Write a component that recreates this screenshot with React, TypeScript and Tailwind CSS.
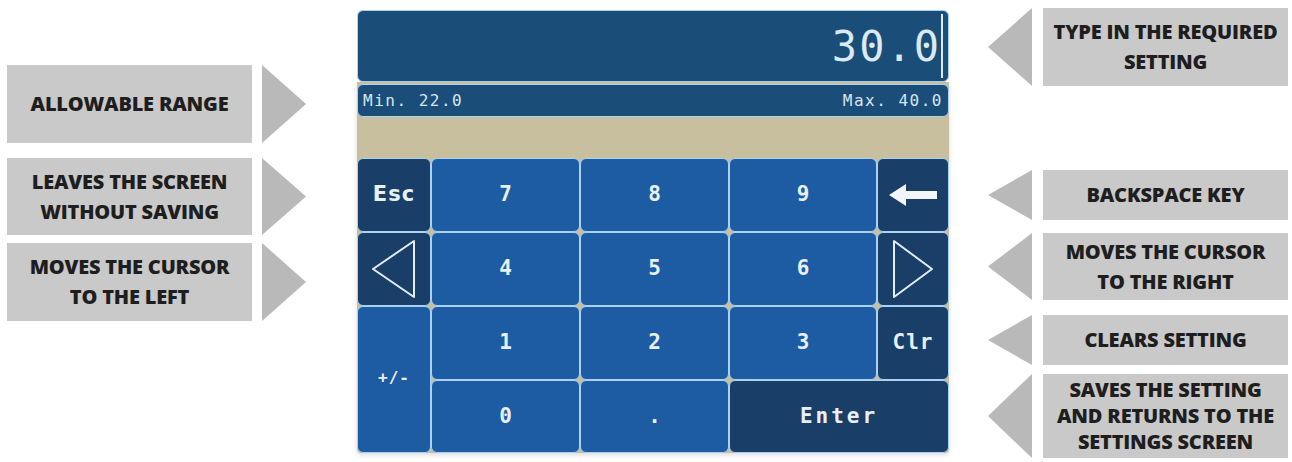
import React from 'react'

const labelFont = { fontFamily: '"Open Sans", "Liberation Sans", sans-serif' }

function LeftLabel({ lines, className }: { lines: string[]; className: string }) {
  return (
    <div className={`flex ${className}`}>
      <div className="w-[245px] bg-[#c9c9c9] flex flex-col items-center justify-center text-[20px] leading-[30px] font-extrabold text-[#1e1e1e] tracking-[-0.2px]">
        {lines.map((l) => (
          <span key={l}>{l}</span>
        ))}
      </div>
      <div className="ml-[10px] w-[44px] bg-[#b9b9b9] [clip-path:polygon(0_0,100%_50%,0_100%)]"></div>
    </div>
  )
}

function RightLabel({
  lines,
  className,
  lead = 'leading-[30px]',
}: {
  lines: string[]
  className: string
  lead?: string
}) {
  return (
    <div className={`flex ${className}`}>
      <div className="w-[44px] bg-[#b9b9b9] [clip-path:polygon(0_50%,100%_0,100%_100%)]"></div>
      <div
        className={`ml-[11px] w-[245px] bg-[#c9c9c9] flex flex-col items-center justify-center text-[20px] ${lead} font-extrabold text-[#1e1e1e] tracking-[-0.2px]`}
      >
        {lines.map((l) => (
          <span key={l}>{l}</span>
        ))}
      </div>
    </div>
  )
}

function Key({
  children,
  dark,
  className = '',
}: {
  children: React.ReactNode
  dark?: boolean
  className?: string
}) {
  return (
    <div
      className={`flex items-center justify-center rounded-[6px] border-[1.5px] border-[#a9d2f3] text-[#e8f0f6] font-bold ${
        dark ? 'bg-[#193f69]' : 'bg-[#1d5ca2]'
      } ${className}`}
    >
      {children}
    </div>
  )
}

export default function App() {
  const mono = { fontFamily: '"DejaVu Sans Mono", "Liberation Mono", monospace' }
  const digit = 'text-[21px]'

  return (
    <div className="w-[1292px] h-[462px] bg-white flex relative overflow-hidden" style={labelFont}>
      {/* left hints */}
      <div className="ml-[7px] flex flex-col">
        <LeftLabel lines={['ALLOWABLE RANGE']} className="mt-[65px] h-[78px]" />
        <LeftLabel lines={['LEAVES THE SCREEN', 'WITHOUT SAVING']} className="mt-[15px] h-[77px]" />
        <LeftLabel lines={['MOVES THE CURSOR', 'TO THE LEFT']} className="mt-[8px] h-[78px]" />
      </div>

      {/* keypad screen */}
      <div className="ml-[51px] mt-[10px] w-[592px] flex flex-col" style={mono}>
        <div className="h-[72px] rounded-[6px] border-[1.5px] border-[#a9d2f3] bg-[#1b4d79] flex items-center justify-end pr-[5px]">
          <span className="text-[42px] text-[#dbe9f3] tracking-[2px] font-light">30.0</span>
          <span className="w-[2px] h-[64px] bg-[#dbe9f3]"></span>
        </div>
        <div className="bg-[#c8bf9e] rounded-b-[4px] shadow-[0_2px_5px_rgba(0,0,0,0.15)]">
          <div className="mt-[2px] h-[33px] rounded-[6px] border-[1.5px] border-[#a9d2f3] bg-[#1b4d79] flex items-center justify-between px-[5px] text-[16px] text-[#d6e6f1] tracking-[1.5px]">
            <span>Min. 22.0</span>
            <span>Max. 40.0</span>
          </div>
          <div className="h-[41px]"></div>
          <div className="grid grid-cols-[74px_149px_149px_148px_72px] grid-rows-[74px_74px_74px_73px]">
            <Key dark className="text-[21px] tracking-[1px]">
              <span style={{ fontFamily: '"DejaVu Sans", sans-serif' }}>Esc</span>
            </Key>
            <Key className={digit}>7</Key>
            <Key className={digit}>8</Key>
            <Key className={digit}>9</Key>
            <Key dark>
              <svg width="52" height="26" viewBox="0 0 52 26">
                <path d="M2 13 L19 2 L19 9 L50 9 L50 17 L19 17 L19 24 Z" fill="#f2f6fa" />
              </svg>
            </Key>

            <Key dark>
              <svg width="50" height="62" viewBox="0 0 50 62">
                <path d="M45 3 L45 59 L4 31 Z" fill="none" stroke="#e2ecf4" strokeWidth="2" strokeLinejoin="round" />
              </svg>
            </Key>
            <Key className={digit}>4</Key>
            <Key className={digit}>5</Key>
            <Key className={digit}>6</Key>
            <Key dark>
              <svg width="46" height="62" viewBox="0 0 46 62">
                <path d="M4 3 L4 59 L42 31 Z" fill="none" stroke="#e2ecf4" strokeWidth="2" strokeLinejoin="round" />
              </svg>
            </Key>

            <Key className="row-span-2 text-[16px] tracking-[1px] pb-[4px]">+/-</Key>
            <Key className={digit}>1</Key>
            <Key className={digit}>2</Key>
            <Key className={digit}>3</Key>
            <Key dark className="text-[21px] tracking-[1px]">Clr</Key>

            <Key className={digit}>0</Key>
            <Key className={digit}>.</Key>
            <Key dark className="col-span-2 text-[21px] tracking-[3px]">Enter</Key>
          </div>
        </div>
      </div>

      {/* right hints */}
      <div className="ml-[39px] flex flex-col">
        <RightLabel lines={['TYPE IN THE REQUIRED', 'SETTING']} className="mt-[8px] h-[78px]" />
        <RightLabel lines={['BACKSPACE KEY']} className="mt-[84px] h-[50px]" />
        <RightLabel lines={['MOVES THE CURSOR', 'TO THE RIGHT']} className="mt-[13px] h-[67px]" />
        <RightLabel lines={['CLEARS SETTING']} className="mt-[15px] h-[50px]" />
        <RightLabel
          lines={['SAVES THE SETTING', 'AND RETURNS TO THE', 'SETTINGS SCREEN']}
          className="mt-[9px] h-[84px]"
          lead="leading-[26px] text-[19px]"
        />
      </div>
    </div>
  )
}
